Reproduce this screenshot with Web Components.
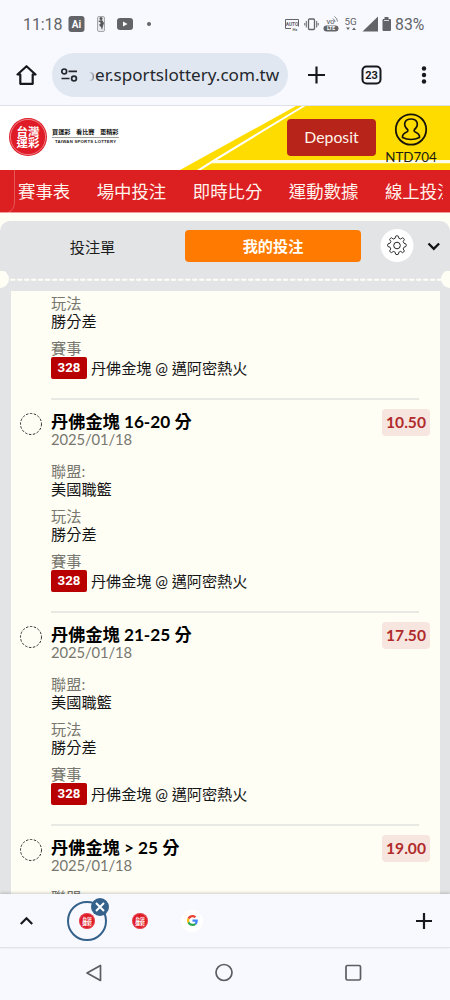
<!DOCTYPE html>
<html lang="zh-Hant"><head><meta charset="utf-8"><title>投注</title>
<style>
html,body{margin:0;padding:0}
body{width:450px;height:1000px;overflow:hidden;background:#f8f9ff;font-family:Lato,"Noto Sans CJK TC",sans-serif;display:flex;flex-direction:column}
</style></head><body>
<status-bar></status-bar>
<browser-toolbar></browser-toolbar>
<site-header></site-header>
<site-nav></site-nav>
<bet-panel>
  <bet-item partial></bet-item>
  <bet-item odds="10.50">丹佛金塊 16-20 分</bet-item>
  <bet-item odds="17.50">丹佛金塊 21-25 分</bet-item>
  <bet-item odds="19.00">丹佛金塊 &gt; 25 分</bet-item>
</bet-panel>
<tab-strip></tab-strip>
<system-nav></system-nav>
<script>
const define=(name,html)=>customElements.define(name,class extends HTMLElement{
  constructor(){super();this.attachShadow({mode:'open'}).innerHTML='<style>*,:host{box-sizing:border-box}svg{display:block;flex:none}</style>'+html;}
});

define('lottery-logo',`<style>:host{display:block;width:38px;height:38px;flex:none}svg{width:100%;height:100%}text{font:700 11.500px "Noto Sans CJK TC",sans-serif;fill:#fff}</style>
<svg viewBox="0 0 38 38"><circle cx="19" cy="19" r="19" fill="#df1b28"/><circle cx="19" cy="19" r="17.600" fill="none" stroke="#f7a9a9" stroke-width=".7"/>
<text x="7.500" y="17.900">台灣</text><text x="7.500" y="29">運彩</text></svg>`);

define('status-bar',`<style>:host{display:flex;height:48px;flex:none;color:#626468;font-family:Roboto,sans-serif;align-items:center;padding-left:23px}
.t{font-size:16px;letter-spacing:-.1px;width:45px;white-space:nowrap}.p{font-size:15.800px;white-space:nowrap;margin-left:2px}</style>
<span class="t">11:18</span>
<svg width="100" height="48" viewBox="68 0 100 48"><rect x="68.500" y="16" width="16" height="16" rx="3" fill="#626468"/>
<text x="76.500" y="28" text-anchor="middle" font-size="10" font-weight="700" fill="#fff">Ai</text>
<rect x="97.500" y="16.500" width="7" height="15" rx="1.500" fill="#e8e9ed" stroke="#a5a6aa"/><circle cx="101" cy="18.500" r="1.500" fill="#555"/><path d="M98 21l4-1 2 3-1 3-1 4-1-3-2-2 2-2z" fill="#55575b"/>
<rect x="117" y="18" width="16" height="12" rx="3" fill="#626468"/><path d="M123 21.500l4.500 2.500-4.500 2.500z" fill="#fff"/>
<circle cx="149" cy="24" r="2" fill="#626468"/></svg>
<svg width="112" height="48" viewBox="281 0 112 48" style="margin-left:113px" fill="none" stroke="#626468">
<path d="M291 28.500h-5.500v-9h13v7"/><text x="292" y="25.500" text-anchor="middle" font-size="4.800" font-weight="700" fill="#626468" stroke="none">AUTO</text><text x="292.500" y="31" font-size="4" font-weight="700" fill="#626468" stroke="none">Hz</text>
<rect x="308.500" y="19" width="6" height="10.500" rx="1" stroke-width="1.300"/><path d="M306.300 21v6.500M304.800 23v2.500M316.700 21v6.500M318.200 23v2.500" />
<text x="326.500" y="24.300" font-size="6" fill="#626468" stroke="none" font-weight="500">VO</text><path d="M333 18.500q2 1.500 2 3.500M334.500 16.500q3 2 3 5" stroke-width=".8"/>
<rect x="323.500" y="25.500" width="15" height="6" rx="3" fill="#626468" stroke="none"/><text x="331" y="30.400" text-anchor="middle" font-size="5" font-weight="700" fill="#fff" stroke="none">LTE</text>
<text x="344.500" y="25.300" font-size="9.800" fill="#626468" stroke="none">5G</text><path d="M346 27.500h4l-2 2.500zM352 30h4l-2-2.500z" fill="#626468" stroke="none"/>
<path d="M362.500 31.500h15.500v-15z" fill="#626468" stroke="none"/><path d="M384.500 17h4v2h1.500q1 0 1 1v10q0 1-1 1h-6.500q-1 0-1-1v-10q0-1 1-1h1z" fill="#626468" stroke="none"/><path d="M384 20.500h5" stroke="#f8f9ff" stroke-width=".8"/></svg>
<span class="p">83%</span>`);

define('browser-toolbar',`<style>:host{display:flex;height:58px;flex:none;align-items:center;padding:0 0 4px 16px;border-bottom:1px solid #dfe1e7}
.u{display:flex;align-items:center;width:236px;height:44px;border-radius:22px;background:#e0e7f0;margin:0 0 0 15px;padding-left:8px}
.url{font:400 17.100px "Noto Sans","Open Sans",sans-serif;color:#24272d;margin-left:8px;white-space:nowrap;width:194px;display:flex}.url i{font-style:normal;width:8px;overflow:hidden;display:flex;justify-content:flex-end;-webkit-mask:linear-gradient(90deg,#0000 25%,#0009);mask:linear-gradient(90deg,#0000 25%,#0009)}</style>
<svg width="21" height="24" viewBox="0 0 21 24" fill="none" stroke="#17191e" stroke-width="2.200" stroke-linejoin="round"><path d="M1.500 11.500l9-8.300 9 8.300h-2.800v9.300H4.300v-9.300z" /></svg>
<div class="u"><svg width="19" height="16" viewBox="0 0 19 16" fill="none" stroke="#24272d" stroke-width="1.700"><circle cx="4.200" cy="4.400" r="2.400"/><path d="M8.500 4.400h8.500M1.500 11.500h8"/><circle cx="14" cy="11.500" r="2.400"/></svg>
<span class="url"><i>b</i><span>er.sportslottery.com.tw</span></span></div>
<svg width="144" height="30" viewBox="306 59.500 144 30" style="margin-left:18px" fill="none" stroke="#17191e"><path d="M308 74.500h17M316.500 66v17" stroke-width="2.200"/>
<rect x="362.500" y="66" width="18" height="17" rx="4" stroke-width="2"/><text x="371.500" y="78.500" text-anchor="middle" font-family="Roboto" font-size="11" font-weight="700" fill="#17191e" stroke="none">23</text>
<g fill="#17191e" stroke="none"><circle cx="424" cy="68" r="2.200"/><circle cx="424" cy="74.500" r="2.200"/><circle cx="424" cy="81" r="2.200"/></g></svg>`);

define('site-header',`<style>:host{display:block;height:64px;flex:none;position:relative;background:#fff}
.bg{position:absolute;inset:0}.row{position:relative;display:flex;height:64px;padding-left:9px}
lottery-logo{margin-top:12px}
button{all:unset;box-sizing:border-box;width:89px;height:37px;background:#b72419;border-radius:4px;margin:12.500px 0 0 166px;text-align:center;color:#fff4ea;font-size:15.800px;line-height:36px}
.acc{width:60px;margin-left:5px;display:flex;flex-direction:column;align-items:center;font-size:13.400px;line-height:16px;color:#211c12;padding-top:6px}</style>
<svg class="bg" width="450" height="64" viewBox="0 106 450 64"><path d="M180 170L296 106H450V170z" fill="#fedc00"/><path d="M201 170l13-8.300L305.500 106h-3.500L214 159.300l-17 10.700z" fill="#fff"/><path d="M216 160H450v3.300H210z" fill="#fffce8"/></svg>
<div class="row"><lottery-logo></lottery-logo>
<svg width="70" height="64" viewBox="51 106 70 64" style="margin-left:4px"><g font-family="Noto Sans CJK TC" font-weight="700" font-size="6.200" fill="#111"><text x="52" y="134.300">買運彩</text><text x="76" y="134.300">看比賽</text><text x="100" y="134.300">更精彩</text></g><path d="M52 137.500h67" stroke="#777" stroke-width=".7"/><text x="55" y="143.400" font-family="Liberation Sans" font-weight="700" font-size="4.300" fill="#222" textLength="61">TAIWAN SPORTS LOTTERY</text></svg>
<button>Deposit</button>
<div class="acc"><svg width="34" height="36" viewBox="394 112 34 36" fill="none" stroke="#17140a"><circle cx="411" cy="129.500" r="15.200" stroke-width="1.800"/><path d="M407.500 129.500c-5-4.500-3-10.500 3.500-10.500s8.500 6 3.500 10.500c-.8 1.200-.3 2 .8 2.500 3.200 1.300 4.500 2.500 4.200 5.500-5 2.500-12 2.500-17 0-.3-3 1-4.200 4.200-5.500 1.100-.5 1.600-1.300.8-2.500z" stroke-width="1.700"/></svg><span style="margin-top:1px">NTD704</span></div></div>`);

define('site-nav',`<style>:host{display:block;height:43px;flex:none;background:#dc1f21;position:relative;border-bottom:1px solid #ef9d94}
nav{display:flex;gap:26.500px;padding-left:18px;width:443px;overflow:hidden;height:42px;line-height:43px;font-size:17.400px;color:#fff3ec;white-space:nowrap}
svg{position:absolute;left:0;top:-20px}</style><nav><span>賽事表</span><span>場中投注</span><span>即時比分</span><span>運動數據</span><span>線上投注</span></nav>
<svg width="20" height="64" fill="none" stroke="#fff" stroke-opacity=".25"><path d="M14.500 18v34q0 8-7 11"/></svg>`);

define('bet-panel',`<style>:host{display:flex;flex:1;min-height:0;background:#fffef5;padding-top:8px;flex-direction:column;overflow:hidden}
.p{background:#e3e4e6;border-radius:10px 10px 0 0;flex:1;min-height:0;display:flex;flex-direction:column;color:#1d1d1d}
.tabs{display:flex;align-items:center;height:50px;flex:none}.a{width:185px;text-align:center;font-size:15.200px}.b{width:176px;height:32px;line-height:32px;border-radius:4px;background:#ff7a00;color:#fffdf5;font-weight:700;font-size:15.200px;text-align:center}
.line{height:20px;flex:none}.list{flex:1;min-height:0;overflow:hidden;margin:0 10px 0 11px;background:#fffef5;padding-top:3px}</style>
<div class="p"><div class="tabs"><div class="a">投注單</div><div class="b">我的投注</div>
<svg width="70" height="40" viewBox="380 226 70 40" style="margin-left:19px"><circle cx="397" cy="245.500" r="16.500" fill="#fff"/><g fill="none" stroke="#222"><circle cx="397" cy="245.500" r="3.300"/><path id="gear" transform="translate(397 245.500) scale(.92) translate(-397 -246.600)"/></g><path d="M428.500 243.500l5.300 5.300 5.300-5.300" fill="none" stroke="#111" stroke-width="2.300"/></svg></div>
<svg class="line" width="450" height="20" viewBox="0 271 450 20"><circle cx="0" cy="279" r="9" fill="#fffef5"/><circle cx="450" cy="279" r="9" fill="#fffef5"/><path d="M11 279.700H441" stroke="#fffef5" stroke-width="2" stroke-dasharray="3.500 3.500" stroke-linecap="round"/></svg><div class="list"><slot></slot></div></div>`);
document.querySelector('bet-panel').shadowRoot.getElementById('gear').setAttribute('d',
  'M395.500 236.500q1.500-1 3 0l.5 2.200 2 .9 2-1.400q1.700.5 2 2l-1.300 2 .9 2 2 .6q1 1.500 0 3l-2 .6-.9 2 1.300 2q-.3 1.500-2 2l-2-1.400-2 .9-.5 2.200q-1.500 1-3 0l-.5-2.200-2-.9-2 1.400q-1.700-.5-2-2l1.300-2-.9-2-2.200-.6q-1-1.500 0-3l2.200-.6.9-2-1.300-2q.3-1.500 2-2l2 1.400 2-.9z');

customElements.define('bet-item',class extends HTMLElement{
  connectedCallback(){
    const partial=this.hasAttribute('partial');
    const head=partial?'':`<div class="rule"></div><header><svg width="24" height="24"><circle cx="12" cy="12" r="10.500" fill="none" stroke="#333" stroke-dasharray="2.500 1.500"/></svg><h3><slot></slot></h3><b>${this.getAttribute('odds')}</b></header><time>2025/01/18</time><dl><dt>聯盟:</dt><dd>美國職籃</dd></dl>`;
    this.attachShadow({mode:'open'}).innerHTML=`<style>*{box-sizing:border-box;margin:0}:host{display:block;color:#151515;white-space:nowrap}
.rule{height:2px;background:#e9e9e3;margin:0 21px 0 40px}
header{display:flex;height:31px;padding-left:8px;align-items:flex-start}header svg{margin-top:12px;flex:none}
h3{font-size:17.200px;line-height:24px;font-weight:700;margin:10px auto 0 8px;color:#000}
header b{width:48px;height:27px;line-height:27px;border-radius:4px;background:#f7e5df;color:#b02b2b;font-size:15.600px;text-align:center;margin:9px 10px 0 0}
time{display:block;height:16px;line-height:17px;font-size:14.800px;color:#77776f;margin:0 0 15px 40px;letter-spacing:-.1px}
dl{margin:0 0 9px 40px;font-size:15.200px;line-height:18px}dt{height:18px;color:#77776f}dd{height:18px}
.m{margin-bottom:19px}.m dt{height:18px}.m dd{height:22px;margin-top:0;display:flex;line-height:22px;gap:4px}.m dd span{letter-spacing:-.07px}.m i{font:700 13.300px/22px Roboto,sans-serif;width:36px;height:22px;background:#b90000;color:#fff;border-radius:2px;text-align:center}</style>
${head}<dl><dt>玩法</dt><dd>勝分差</dd></dl><dl class="m"><dt>賽事</dt><dd><i>328</i><span>丹佛金塊 @ 邁阿密熱火</span></dd></dl>`;
  }
});

define('tab-strip',`<style>:host{display:flex;height:54px;flex:none;background:#f8f9ff;border-bottom:1px solid #e0e2e8;box-shadow:0 -1px 3px #0003;position:relative;align-items:center}
.sel{width:40px;height:40px;border:2px solid #35628a;border-radius:50%;display:grid;place-items:center;position:relative;margin-left:32px}
.sel svg{position:absolute;left:22px;top:-5px}.sel lottery-logo,lottery-logo{width:16px;height:16px}
.g{width:22px;height:22px;border-radius:50%;background:#fff;display:grid;place-items:center;margin-left:33px}</style>
<svg width="16" height="16" style="margin-left:19px" fill="none" stroke="#17191e" stroke-width="2.200"><path d="M1.800 11l5.700-5.700L13.200 11"/></svg>
<div class="sel"><lottery-logo></lottery-logo><svg width="18" height="18"><circle cx="9" cy="9" r="9" fill="#35628a"/><path d="M5 5l8 8M13 5l-8 8" stroke="#fff" stroke-width="2"/></svg></div>
<lottery-logo style="margin-left:25px"></lottery-logo>
<div class="g"><svg width="11" height="11" viewBox="0 0 48 48"><path fill="#EA4335" d="M24 9.500c3.540 0 6.710 1.220 9.210 3.600l6.850-6.850C35.900 2.380 30.470 0 24 0 14.620 0 6.510 5.380 2.560 13.220l7.980 6.190C12.430 13.720 17.740 9.500 24 9.500z"/><path fill="#4285F4" d="M46.980 24.550c0-1.570-.15-3.090-.38-4.550H24v9.020h12.940c-.58 2.960-2.260 5.480-4.780 7.180l7.730 6c4.510-4.180 7.090-10.360 7.090-17.650z"/><path fill="#FBBC05" d="M10.530 28.590c-.48-1.450-.76-2.990-.76-4.590s.27-3.140.76-4.590l-7.980-6.190C.92 16.460 0 20.120 0 24s.92 7.540 2.560 10.780z"/><path fill="#34A853" d="M24 48c6.480 0 11.930-2.130 15.890-5.810l-7.730-6c-2.150 1.450-4.920 2.300-8.160 2.300-6.260 0-11.570-4.220-13.470-9.910l-7.980 6.190C6.510 42.620 14.620 48 24 48z"/></svg></div>
<svg width="18" height="18" style="margin:0 17px 0 auto" stroke="#17191e" stroke-width="2.200"><path d="M1 9h16M9 1v16"/></svg>`);

define('system-nav',`<style>:host{display:block;height:52px;flex:none}</style><svg width="450" height="52" viewBox="0 948 450 52" fill="none" stroke="#5b5d62" stroke-width="1.700" stroke-linejoin="round"><path d="M100.500 965.500v15L87 973z"/><circle cx="224" cy="972.500" r="8"/><rect x="346" y="965.500" width="14.500" height="14.500" rx="1.500"/></svg>`);
</script></body></html>
